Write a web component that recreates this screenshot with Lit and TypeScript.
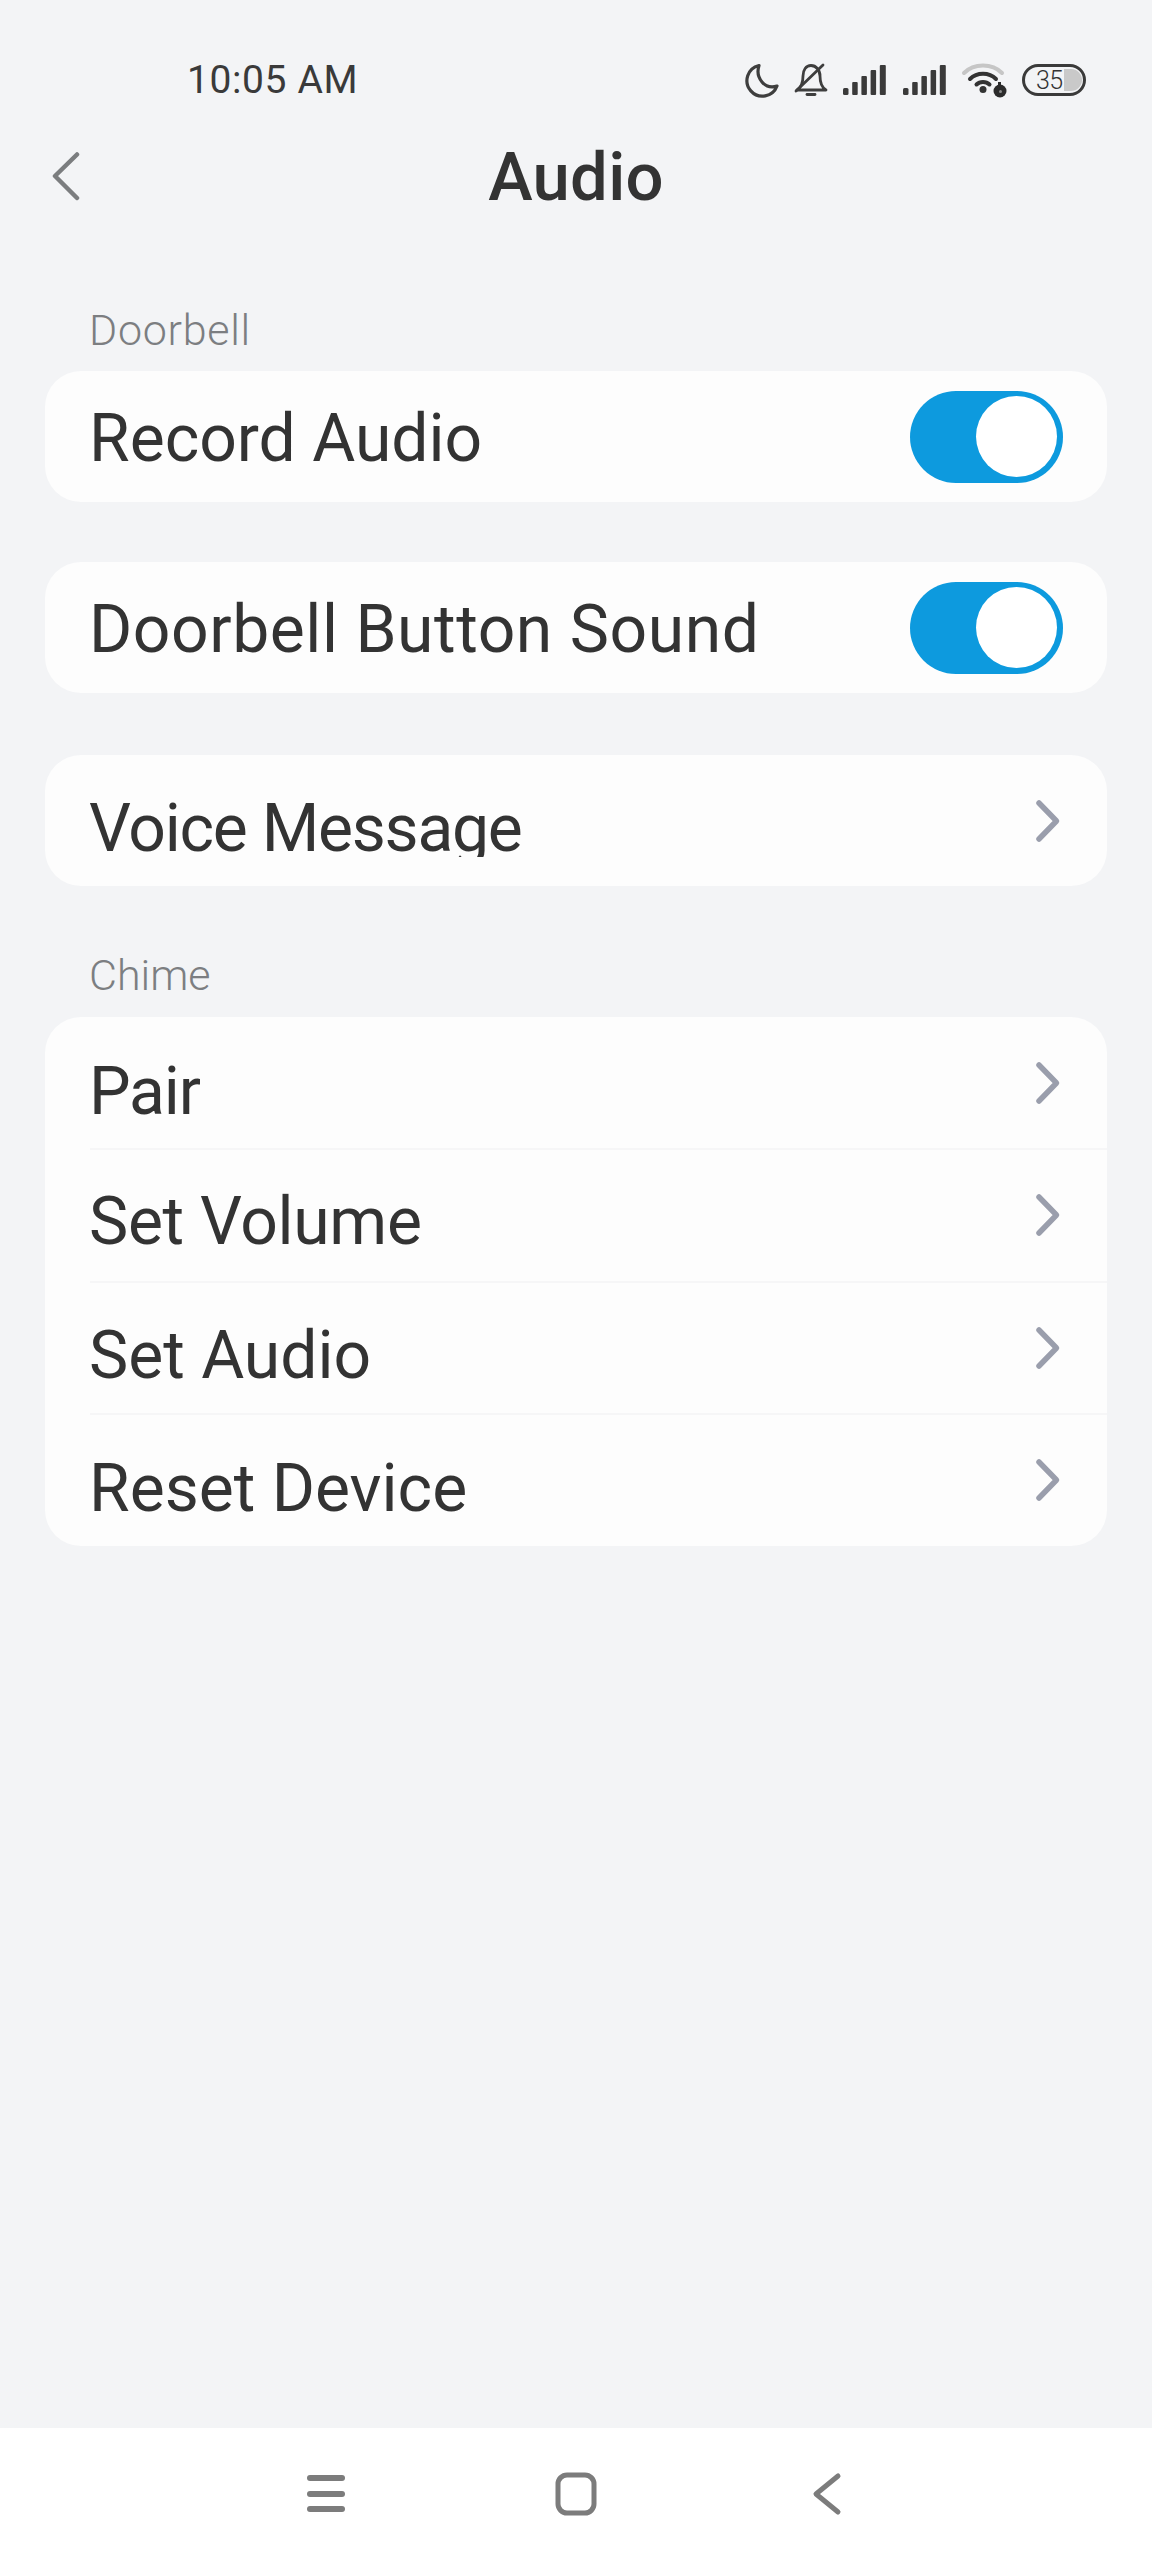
import { LitElement, html, css } from "lit";
import { customElement } from "lit/decorators.js";

const chevron = html`<svg class="chev" width="26" height="44" viewBox="0 0 26 44"><path d="M4 4 L21.500 22 L4 40" fill="none" stroke="#9a9eac" stroke-width="5.500" stroke-linecap="round" stroke-linejoin="round"/></svg>`;
const bars = html`<svg width="43" height="32" viewBox="0 0 43 32"><g fill="#3a3a3a"><rect x="0" y="24" width="5.500" height="7" rx="1.500"/><rect x="9.200" y="18" width="5.500" height="13" rx="1"/><rect x="18.400" y="12" width="5.500" height="19" rx="1"/><rect x="27.600" y="6" width="5.500" height="25" rx="1"/><rect x="36.800" y="1" width="6" height="30" rx="1"/></g></svg>`;

@customElement("app-root")
export class AppRoot extends LitElement {
  static styles = css`
    :host { display: block; font-family: Roboto, "Noto Sans", sans-serif; color: #333333; }
    .page { width: 1152px; height: 2560px; background: #f3f4f6; display: flex; flex-direction: column; }
    .status { height: 100px; padding-top: 30px; display: flex; align-items: center; justify-content: space-between; padding-left: 187px; padding-right: 66px; }
    .time { font-size: 39px; letter-spacing: 0.6px; color: #3a3a3a; line-height: 100px; height: 100px; }
    .icons { display: flex; align-items: center; }
    .icons svg { display: block; }
    .header { height: 92px; display: flex; align-items: center; position: relative; justify-content: center; }
    .back { position: absolute; left: 50px; top: 21px; display: block; }
    .title { font-size: 67px; font-weight: 500; line-height: 92px; height: 92px; padding-top: 2px; letter-spacing: 0.3px; color: #333; }
    .main { flex: 1; padding: 0 45px; display: flex; flex-direction: column; }
    .section { font-size: 43px; font-weight: 300; color: #7c7e81; line-height: 50px; padding-left: 44px; }
    .s1 { padding-top: 83px; padding-bottom: 16px; letter-spacing: 0.7px; }
    .s2 { padding-top: 64px; padding-bottom: 17px; }
    .card { background: #fdfdfd; border-radius: 36px; overflow: hidden; }
    .gap1 { margin-top: 60px; }
    .gap2 { margin-top: 62px; }
    .row { height: 131px; padding-left: 44px; padding-right: 45px; display: flex; align-items: center; justify-content: space-between; }
    .row.sw { padding-right: 44px; }
    .list .row { height: 132.500px; border-top: 2px solid #f6f6f7; box-sizing: border-box; margin-left: 45px; padding-left: 0; }
    .list .row:first-child { height: 131px; border-top: none; margin-left: 0; padding-left: 45px; }
    .label { font-size: 66px; line-height: 80px; height: 80px; color: #333; padding-top: 5px; font-weight: 400; white-space: nowrap; overflow: hidden; }
    .list .label { padding-top: 14px; margin-left: -1px; }
    .list .row:first-child .label { padding-top: 18px; }
    .list .row.low .label { padding-top: 17px; }
    .clip { height: 68px; padding-top: 5px; letter-spacing: -1.250px; }
    .wide { letter-spacing: 0.550px; }
    .tight { letter-spacing: -1.200px; }
    .snug { letter-spacing: -0.300px; }
    .toggle { width: 153px; height: 92px; background: #0d9ade; border-radius: 46px; display: flex; align-items: center; justify-content: flex-end; padding-right: 6px; box-sizing: border-box; flex: none; }
    .knob { width: 81px; height: 81px; border-radius: 50%; background: #ffffff; }
    .chev { display: block; margin-right: 1px; }
    .nav { height: 132px; background: #ffffff; display: flex; align-items: center; justify-content: center; gap: 200px; }
    .nav svg { display: block; }
    .m15 { margin-right: 15px; }
    .m17 { margin-right: 17px; }
    .bars { display: block; }
    .batt-text { font-family: Roboto, sans-serif; font-size: 25px; font-weight: 300; fill: #333; }
  `;

  render() {
    return html`<div class="page">
      <div class="status">
        <div class="time">10:05 AM</div>
        <div class="icons">
          <svg class="m15" width="34" height="35" viewBox="0 0 34 35"><path d="M14 2.500 A15.500 15.500 0 1 0 32 23 C20 27 10 15 14 2.500 Z" fill="none" stroke="#3e3e3e" stroke-width="3.200" stroke-linejoin="round"/></svg>
          <svg class="m15" width="34" height="36" viewBox="0 0 34 36"><g fill="none" stroke="#3e3e3e" stroke-width="2.800" stroke-linecap="round" stroke-linejoin="round"><path d="M3 28 H32 C27 25 26 20 26 14 C26 8 22 3.500 17 3.500 C12 3.500 9 8 9 14 C9 20 8 25 3 28 Z"/><path d="M2 29 L29 3"/><path d="M13 32.500 H21"/></g></svg>
          <span class="bars m17">${bars}</span>
          <span class="bars m15">${bars}</span>
          <svg class="m15" width="46" height="36" viewBox="0 0 46 36"><g fill="none" stroke-linecap="round" stroke-width="4"><path d="M3 11 C13 1 31 1 41 11" stroke="#c6c6c6"/><path d="M9 17 C16 10 28 10 35 17" stroke="#333"/><path d="M15.500 22.500 C19 19 25 19 28.500 22.500" stroke="#333"/></g><circle cx="22" cy="27.500" r="3.500" fill="#333"/><circle cx="39" cy="29" r="6.500" fill="#2b2b2b"/><rect x="37" y="20" width="3" height="8" fill="#2b2b2b"/><circle cx="39.500" cy="29.500" r="1.500" fill="#8a8a8a"/></svg>
          <svg width="64" height="32" viewBox="0 0 64 32"><rect x="1.500" y="1.500" width="61" height="29" rx="14.500" fill="none" stroke="#3a3a3a" stroke-width="3"/><path d="M42 5 H49 A11 11 0 0 1 49 27 H42 Z" fill="#c9c9c9"/><text class="batt-text" x="14" y="25" textLength="27">35</text></svg>
        </div>
      </div>
      <div class="header">
        <svg class="back" width="32" height="50" viewBox="0 0 32 50"><path d="M27 3.500 L5 25 L27 47" fill="none" stroke="#7b7d7f" stroke-width="4.500" stroke-linecap="round" stroke-linejoin="round"/></svg>
        <div class="title">Audio</div>
      </div>
      <div class="main">
        <div class="section s1">Doorbell</div>
        <div class="card"><div class="row sw"><div class="label">Record Audio</div><div class="toggle"><div class="knob"></div></div></div></div>
        <div class="card gap1"><div class="row sw"><div class="label wide">Doorbell Button Sound</div><div class="toggle"><div class="knob"></div></div></div></div>
        <div class="card gap2"><div class="row"><div class="label clip">Voice Message</div>${chevron}</div></div>
        <div class="section s2">Chime</div>
        <div class="card list">
          <div class="row"><div class="label tight">Pair</div>${chevron}</div>
          <div class="row"><div class="label snug">Set Volume</div>${chevron}</div>
          <div class="row low"><div class="label">Set Audio</div>${chevron}</div>
          <div class="row low"><div class="label">Reset Device</div>${chevron}</div>
        </div>
      </div>
      <div class="nav">
        <svg width="50" height="46" viewBox="0 0 50 46"><g stroke="#7c7c7c" stroke-width="6" stroke-linecap="round"><path d="M9 7 H41"/><path d="M9 23 H41"/><path d="M9 38 H41"/></g></svg>
        <svg width="50" height="46" viewBox="0 0 50 46"><rect x="7" y="4" width="36" height="38" rx="9" fill="none" stroke="#7c7c7c" stroke-width="5"/></svg>
        <svg width="50" height="46" viewBox="0 0 50 46"><path d="M37 5 L15 23 L37 41" fill="none" stroke="#7c7c7c" stroke-width="5" stroke-linecap="round" stroke-linejoin="round"/></svg>
      </div>
    </div>`;
  }
}
